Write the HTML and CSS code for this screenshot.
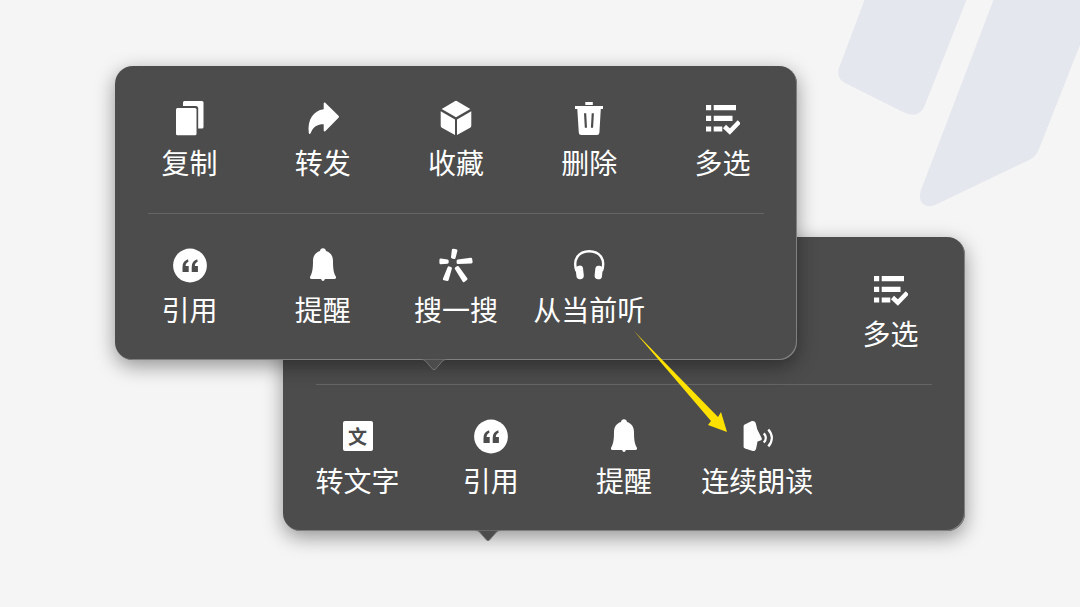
FILE: index.html
```html
<!DOCTYPE html>
<html lang="zh-CN">
<head>
    <meta charset="UTF-8">
    <meta name="viewport" content="width=device-width, initial-scale=1.0">
    <title>消息菜单</title>
    <link rel="stylesheet" href="styles.css">
</head>
<body>
    <!-- Icon set -->
    <svg class="icon-defs" aria-hidden="true">
        <symbol id="icon-copy" viewBox="0 0 36 36">
            <path d="M12.500 1H30a1.500 1.500 0 0 1 1.500 1.500V27a1.500 1.500 0 0 1-1.500 1.500h-3.800V8.500a2.500 2.500 0 0 0-2.500-2.500H11V2.500A1.500 1.500 0 0 1 12.500 1z"/>
            <rect x="4" y="8" width="20.500" height="27.200" rx="1.500"/>
        </symbol>
        <symbol id="icon-forward" viewBox="0 0 36 36">
            <path d="M18.700 3.600c0-1.100 1-1.400 1.800-.6l13 12.700c.6.600.6 1.400 0 2L20.500 31c-.8.800-1.800.4-1.800-.6v-6.200C12 24.200 8.200 26.800 5.700 33.100c-.5 1.200-1.700 1.100-1.900-.2C2.100 20 8.300 10.600 18.700 9.300z"/>
        </symbol>
        <symbol id="icon-cube" viewBox="0 0 36 36">
            <path d="M16.800 1.200a2.400 2.400 0 0 1 2.400 0L32.300 9 18 17.300 3.700 9zM2.700 11.300l14.300 8.200V35L3.900 27.800a2.400 2.400 0 0 1-1.200-2zM33.300 11.300L19 19.500V35l13.100-7.200a2.400 2.400 0 0 0 1.200-2z"/>
        </symbol>
        <symbol id="icon-trash" viewBox="0 0 36 36">
            <path fill-rule="evenodd" d="M14.300 2h7.500v3h-7.500zM4 6h28v3h-2.200l-1.400 23.700a2.500 2.500 0 0 1-2.500 2.300H10.300A2.500 2.500 0 0 1 7.800 32.700L6.300 9H4zM13 13.300l.8 14.500H16l-.8-14.500zM20.700 13.300l-.8 14.500h2.200l.8-14.500z"/>
        </symbol>
        <symbol id="icon-select" viewBox="0 0 36 36">
            <path d="M2 5h5.200v5.200H2zM9.700 5H32v5.200H9.700zM2 15.700h5.200v5.200H2zM9.700 15.700h18.800v5.200H9.700zM2 26.400h5.200v5.200H2zM9.700 26.400h8.600v5.200H9.700z"/>
            <path class="icon-line" stroke-width="4.500" stroke-linecap="butt" d="M20.500 26.500l5.300 5 9.500-9.800"/>
        </symbol>
        <symbol id="icon-quote" viewBox="0 0 36 36">
            <circle cx="18" cy="18.500" r="16.900"/>
            <path class="icon-cut" d="M16 12.300c-3.700 1.200-5.500 3.800-5.500 7.700v5h6.200v-6h-3.100c0-2 .9-3.300 2.900-4.300zM25.200 12.300c-3.700 1.200-5.500 3.800-5.500 7.700v5h6.200v-6h-3.100c0-2 .9-3.300 2.900-4.300z"/>
        </symbol>
        <symbol id="icon-bell" viewBox="0 0 36 36">
            <path d="M18 1.300c1.700 0 2.700 1.100 3 2.700 4.500 1.300 7 5 7 10 0 8 .7 11.500 2.700 15.300.8 1.500.2 2.700-1.200 2.700H19.900c-.4 1.300-1 1.900-1.900 1.900s-1.500-.6-1.900-1.900H6.500c-1.400 0-2-1.200-1.200-2.700C7.300 25.500 8 22 8 14c0-5 2.500-8.700 7-10 .3-1.600 1.300-2.700 3-2.700z"/>
        </symbol>
        <symbol id="icon-search" viewBox="0 0 36 36">
            <path stroke="currentColor" stroke-width="2.800" stroke-linejoin="round" d="M15.200 3.200l2.800.5-1.800 6.900-1.800-.4zM2.800 12.900l6.500 1v1.400l-6.500.6zM20 13.800l12.800-1.600.4 2.800L20 15.600zM10.900 20.800l1.600.6-3.200 11.300-3-.7zM18.200 21.500l1.500-1.100 8.300 11.500-2.200 1.900z"/>
        </symbol>
        <symbol id="icon-headphones" viewBox="0 0 36 36">
            <path class="icon-line" stroke-width="2.400" d="M5.500 24C1.500 12.500 7.500 4.200 18.200 4.200S34.900 12.500 30.900 24"/>
            <rect x="5" y="18.700" width="7.400" height="13.600" rx="3.500" transform="rotate(-6 8 25)"/>
            <rect x="24" y="18.700" width="7.400" height="13.600" rx="3.500" transform="rotate(6 28 25)"/>
        </symbol>
        <symbol id="icon-read" viewBox="0 0 36 36">
            <path d="M4.600 8.200c0-.9.400-1.400 1.200-1.800l6.500-3.100c2.300-.9 4 .2 4.600 2.400l1.300 5.600 4.400 8.700c.6 1.400.1 2.200-1.200 2.600l-2.900.9-1.300 6.700c-.5 2.400-2 3.300-4.200 2.600l-7-2.300c-.9-.3-1.400-.9-1.400-1.900z"/>
            <path class="icon-line" stroke-width="2.400" d="M24.800 15.300c2.600 2.700 2.600 6.400 0 9.200M29.300 11.500c4.600 5.200 4.600 11.700 0 16.900"/>
        </symbol>
    </svg>

    <svg class="backdrop" viewBox="0 0 260 210" aria-hidden="true">
        <path d="M46-4L19 68q-3 10 6 15l58 29q16 8 22-7L148-4zM175-4L101 190q-3 9 2 14 5 4 12 1l94-45q7-3 10-11L260 45V-4z"/>
    </svg>

    <main class="stage">
        <div class="menu menu-back">
            <div class="menu-row">
                <button type="button" class="menu-item item-last"><svg class="icon"><use href="#icon-select"/></svg><span>多选</span></button>
            </div>
            <div class="menu-row">
                <button type="button" class="menu-item"><span class="icon-char" aria-hidden="true">文</span><span>转文字</span></button>
                <button type="button" class="menu-item"><svg class="icon"><use href="#icon-quote"/></svg><span>引用</span></button>
                <button type="button" class="menu-item"><svg class="icon"><use href="#icon-bell"/></svg><span>提醒</span></button>
                <button type="button" class="menu-item"><svg class="icon"><use href="#icon-read"/></svg><span>连续朗读</span></button>
            </div>
            <svg class="tail" viewBox="0 0 26 12" aria-hidden="true"><path d="M0 .500h1q2 0 3.500 1.500l7 8q1.500 1.500 3 0l7-8Q23 .500 25 .500h1"/></svg>
        </div>

        <div class="menu menu-front">
            <div class="menu-row">
                <button type="button" class="menu-item"><svg class="icon"><use href="#icon-copy"/></svg><span>复制</span></button>
                <button type="button" class="menu-item"><svg class="icon"><use href="#icon-forward"/></svg><span>转发</span></button>
                <button type="button" class="menu-item"><svg class="icon"><use href="#icon-cube"/></svg><span>收藏</span></button>
                <button type="button" class="menu-item"><svg class="icon"><use href="#icon-trash"/></svg><span>删除</span></button>
                <button type="button" class="menu-item"><svg class="icon"><use href="#icon-select"/></svg><span>多选</span></button>
            </div>
            <div class="menu-row">
                <button type="button" class="menu-item"><svg class="icon"><use href="#icon-quote"/></svg><span>引用</span></button>
                <button type="button" class="menu-item"><svg class="icon"><use href="#icon-bell"/></svg><span>提醒</span></button>
                <button type="button" class="menu-item"><svg class="icon"><use href="#icon-search"/></svg><span>搜一搜</span></button>
                <button type="button" class="menu-item"><svg class="icon"><use href="#icon-headphones"/></svg><span>从当前听</span></button>
            </div>
            <svg class="tail" viewBox="0 0 26 12" aria-hidden="true"><path d="M0 .500h1q2 0 3.500 1.500l7 8q1.500 1.500 3 0l7-8Q23 .500 25 .500h1"/></svg>
            <svg class="arrow" viewBox="0 0 94 102" aria-hidden="true"><path d="M0 0L84 86l3-5 6 20-19-7 3-4z"/></svg>
        </div>
    </main>
</body>
</html>
```

FILE: styles.css
```css
* {
    margin: 0;
    padding: 0;
    box-sizing: border-box;
}

body {
    font-family: "Noto Sans CJK SC", sans-serif;
    background: #f5f5f5;
    color: #fff;
    min-height: 100vh;
    position: relative;
    overflow-x: hidden;
}

.icon-defs {
    position: absolute;
    width: 0;
    height: 0;
}

.backdrop {
    position: absolute;
    top: 0;
    right: 0;
    width: 260px;
    height: 210px;
    fill: #e4e7ee;
}

/* The two menus share the middle cell, so they overlap */
.stage {
    display: grid;
    grid-template-columns: 168px 1fr 168px;
    grid-template-rows: 171px auto 171px;
    padding: 66px 115px;
    position: relative;
}

.menu {
    position: relative;
    background: #4c4c4c;
    border-radius: 18px;
    box-shadow: inset -1px -1px 0 #808080, 0 6px 20px rgba(0, 0, 0, 0.4);
}

.menu-front {
    grid-column: 1 / 3;
    grid-row: 1 / 3;
}

.menu-back {
    grid-column: 2 / 4;
    grid-row: 2 / 4;
}

.menu-row {
    display: grid;
    grid-template-columns: repeat(5, 1fr);
    padding: 34px 8px 33px;
    position: relative;
}

.menu-row + .menu-row::before {
    content: "";
    position: absolute;
    top: 0;
    left: 33px;
    right: 33px;
    height: 1px;
    background: #656565;
}

.menu-item {
    display: flex;
    flex-direction: column;
    align-items: center;
    gap: 8px;
    background: none;
    border: none;
    color: inherit;
    font-family: inherit;
    font-size: 28px;
    line-height: 36px;
    white-space: nowrap;
    cursor: pointer;
}

.item-last {
    grid-column: 5;
}

.icon {
    width: 36px;
    height: 36px;
    fill: currentColor;
}

.icon-line {
    fill: none;
    stroke: currentColor;
}

.icon-cut {
    fill: #4c4c4c;
}

.icon-char {
    width: 30px;
    height: 30px;
    margin: 3px;
    border-radius: 2px;
    background: #fff;
    color: #4c4c4c;
    font-size: 19px;
    font-weight: 700;
    line-height: 30px;
    text-align: center;
}

.tail {
    position: absolute;
    top: calc(100% - 1px);
    width: 26px;
    height: 12px;
    fill: #4c4c4c;
    stroke: #757575;
}

.menu-front .tail {
    left: 306px;
}

.menu-back .tail {
    left: 192px;
}

.arrow {
    position: absolute;
    top: 265px;
    left: 519px;
    width: 94px;
    height: 102px;
    fill: #ffe100;
}
```
